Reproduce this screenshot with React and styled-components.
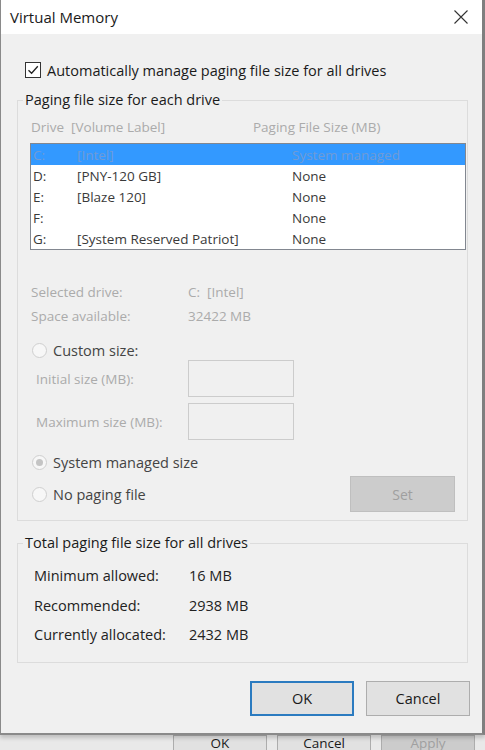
import React from "react";
import styled, { createGlobalStyle } from "styled-components";

const Global = createGlobalStyle`
  html, body { margin: 0; padding: 0; background: #ececec; }
  body { font-family: "Open Sans", "Noto Sans", sans-serif; font-size: 14px; }
`;

const Page = styled.div`
  width: 485px;
  height: 750px;
  display: flex;
  flex-direction: column;
  overflow: hidden;
  background: #e9e9e9;
`;

const Dialog = styled.div`
  height: 735px;
  box-sizing: border-box;
  border-left: 1px solid #8a8a8a;
  border-right: 3px solid #7f7f7f;
  border-bottom: 2px solid #8a8a8a;
  background: #f0f0f0;
  display: flex;
  flex-direction: column;
  box-shadow: 0 3px 4px rgba(0, 0, 0, 0.18);
  position: relative;
  z-index: 1;
`;

const TitleBar = styled.div`
  height: 33px;
  background: #fff;
  display: flex;
  align-items: center;
  justify-content: space-between;
  padding: 0 14px 1px 9px;
`;

const Title = styled.div`
  font-size: 15px;
  color: #1a1a1a;
`;

const Body = styled.div`
  flex: 1;
  padding: 26px 14px 0 16px;
  display: flex;
  flex-direction: column;
`;

const CheckRow = styled.label`
  height: 20px;
  display: flex;
  align-items: center;
  gap: 6px;
  padding-left: 8px;
  font-size: 14.5px;
  color: #1a1a1a;
`;

const CheckBox = styled.span`
  width: 14px;
  height: 14px;
  border: 1px solid #333;
  background: #fff;
  display: flex;
  align-items: center;
  justify-content: center;
`;

const Group = styled.fieldset`
  margin: ${(p) => p.$top}px 0 0 0;
  padding: 0;
  border: 1px solid #dcdcdc;
  min-width: 0;
`;

const Legend = styled.legend`
  margin-left: 5px;
  padding: 0 2px;
  line-height: 20px;
  font-size: 14.5px;
  color: #1a1a1a;
`;

const GroupInner = styled.div`
  padding: ${(p) => p.$pad};
  display: flex;
  flex-direction: column;
`;

const HeaderRow = styled.div`
  display: grid;
  grid-template-columns: 222px 1fr;
  height: 20px;
  align-items: center;
  margin-top: 7px;
  color: #ababab;
  font-size: 13.5px;
`;

const List = styled.div`
  margin-top: 6px;
  margin-left: -1px;
  border: 1px solid #828790;
  background: #fff;
  height: 105px;
`;

const ListRow = styled.div`
  height: 21px;
  display: grid;
  grid-template-columns: 44px 215px 1fr;
  align-items: center;
  padding-left: 2px;
  font-size: 13.5px;
  background: ${(p) => (p.$selected ? "#3399ff" : "transparent")};
  color: ${(p) => (p.$selected ? "#6f9bd6" : "#3a3a3a")};
`;

const InfoRow = styled.div`
  height: 24px;
  display: grid;
  grid-template-columns: 157px 1fr;
  align-items: center;
  color: #ababab;
  font-size: 13.5px;
  margin-top: ${(p) => p.$top || 0}px;
`;

const RadioRow = styled.div`
  height: ${(p) => p.$h || 20}px;
  display: flex;
  align-items: center;
  gap: 6px;
  margin-top: ${(p) => p.$top || 0}px;
  font-size: 14.5px;
  color: #444;
`;

const Radio = styled.span`
  width: 13px;
  height: 13px;
  border-radius: 50%;
  border: 1px solid #cfcfcf;
  background: #f7f7f7;
  display: flex;
  align-items: center;
  justify-content: center;
  margin-left: 1px;
  &::after {
    content: "";
    width: 7px;
    height: 7px;
    border-radius: 50%;
    background: ${(p) => (p.$checked ? "#c4c4c4" : "transparent")};
  }
`;

const SizeRow = styled.div`
  display: grid;
  grid-template-columns: 152px 106px;
  align-items: center;
  padding-left: 5px;
  margin-top: ${(p) => p.$top || 0}px;
  color: #ababab;
  font-size: 13.5px;
`;

const SizeBox = styled.div`
  height: 35px;
  border: 1px solid #cccccc;
  background: #f0f0f0;
`;

const Spacer = styled.div`
  flex: 1;
`;

const SetButton = styled.div`
  width: 103px;
  height: 34px;
  border: 1px solid #bfbfbf;
  background: #cccccc;
  color: #9f9f9f;
  display: flex;
  align-items: center;
  justify-content: center;
  font-size: 14px;
  margin-right: 11px;
`;

const TotalRow = styled.div`
  height: 29.5px;
  display: grid;
  grid-template-columns: 155px 1fr;
  align-items: center;
  font-size: 14.5px;
  color: #222;
`;

const ButtonRow = styled.div`
  margin-top: 18px;
  margin-right: -2px;
  display: flex;
  justify-content: flex-end;
  gap: 12px;
`;

const Button = styled.div`
  width: 104px;
  height: 35px;
  box-sizing: border-box;
  border: ${(p) => (p.$default ? "2px solid #2b7bc0" : "1px solid #adadad")};
  background: #e1e1e1;
  color: #1a1a1a;
  display: flex;
  align-items: center;
  justify-content: center;
  font-size: 14.5px;
`;

const BackStrip = styled.div`
  flex: 1;
  display: flex;
  justify-content: flex-end;
  gap: 10px;
  padding-right: 10px;
`;

const BackButton = styled.div`
  width: 94px;
  box-sizing: border-box;
  border: 1px solid #adadad;
  border-bottom: none;
  background: ${(p) => (p.$disabled ? "#cccccc" : "#e1e1e1")};
  color: ${(p) => (p.$disabled ? "#a0a0a0" : "#1a1a1a")};
  display: flex;
  justify-content: center;
  align-items: center;
  font-size: 13.5px;
  line-height: 13px;
`;

const drives = [
  ["C:", "[Intel]", "System managed", true],
  ["D:", "[PNY-120 GB]", "None"],
  ["E:", "[Blaze 120]", "None"],
  ["F:", "", "None"],
  ["G:", "[System Reserved Patriot]", "None"],
];

export default function App() {
  return (
    <>
      <Global />
      <Page>
        <Dialog>
          <TitleBar>
            <Title>Virtual Memory</Title>
            <svg width="14" height="14" viewBox="0 0 14 14">
              <path d="M0.5 0.5 L13.5 13.5 M13.5 0.5 L0.5 13.5" stroke="#333" strokeWidth="1.1" />
            </svg>
          </TitleBar>
          <Body>
            <CheckRow>
              <CheckBox>
                <svg width="12" height="12" viewBox="0 0 12 12">
                  <path d="M1.5 6.2 L4.6 9.3 L10.8 2.2" fill="none" stroke="#222" strokeWidth="1.3" />
                </svg>
              </CheckBox>
              Automatically manage paging file size for all drives
            </CheckRow>

            <Group $top={10}>
              <Legend>Paging file size for each drive</Legend>
              <GroupInner $pad="0 1px 8px 13px">
                <HeaderRow>
                  <span>Drive&nbsp; [Volume Label]</span>
                  <span>Paging File Size (MB)</span>
                </HeaderRow>
                <List>
                  {drives.map(([d, label, size, sel]) => (
                    <ListRow key={d} $selected={sel}>
                      <span>{d}</span>
                      <span>{label}</span>
                      <span>{size}</span>
                    </ListRow>
                  ))}
                </List>
                <InfoRow $top={30}>
                  <span>Selected drive:</span>
                  <span>C:&nbsp; [Intel]</span>
                </InfoRow>
                <InfoRow>
                  <span>Space available:</span>
                  <span>32422 MB</span>
                </InfoRow>
                <RadioRow $top={12}>
                  <Radio />
                  Custom size:
                </RadioRow>
                <SizeRow>
                  <span>Initial size (MB):</span>
                  <SizeBox />
                </SizeRow>
                <SizeRow $top={6}>
                  <span>Maximum size (MB):</span>
                  <SizeBox />
                </SizeRow>
                <RadioRow $top={12}>
                  <Radio $checked />
                  System managed size
                </RadioRow>
                <RadioRow $top={4} $h={36}>
                  <Radio />
                  No paging file
                  <Spacer />
                  <SetButton>Set</SetButton>
                </RadioRow>
              </GroupInner>
            </Group>

            <Group $top={12}>
              <Legend>Total paging file size for all drives</Legend>
              <GroupInner $pad="8px 1px 12px 16px">
                <TotalRow>
                  <span>Minimum allowed:</span>
                  <span>16 MB</span>
                </TotalRow>
                <TotalRow>
                  <span>Recommended:</span>
                  <span>2938 MB</span>
                </TotalRow>
                <TotalRow>
                  <span>Currently allocated:</span>
                  <span>2432 MB</span>
                </TotalRow>
              </GroupInner>
            </Group>

            <ButtonRow>
              <Button $default>OK</Button>
              <Button>Cancel</Button>
            </ButtonRow>
          </Body>
        </Dialog>
        <BackStrip>
          <BackButton>OK</BackButton>
          <BackButton>Cancel</BackButton>
          <BackButton $disabled>Apply</BackButton>
        </BackStrip>
      </Page>
    </>
  );
}
